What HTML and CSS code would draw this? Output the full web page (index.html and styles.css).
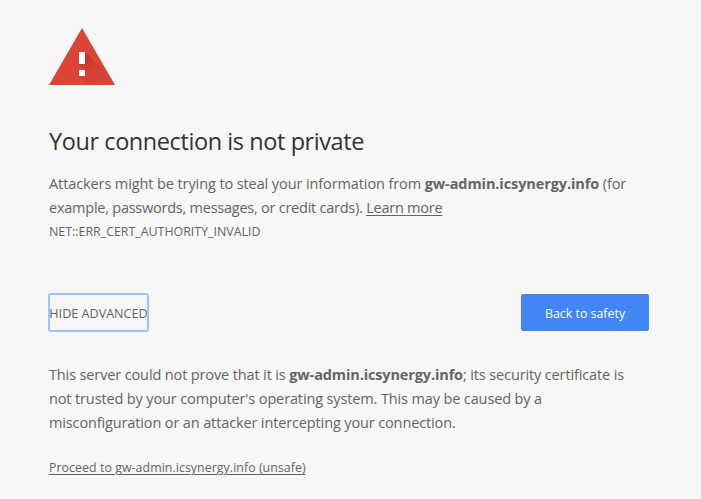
FILE: index.html
```html
<!DOCTYPE html>
<html lang="en">
<head>
<meta charset="utf-8">
<title>Privacy error</title>
<link rel="stylesheet" href="styles.css">
</head>
<body>
<main class="interstitial">
  <svg class="warning" viewBox="0 0 66 57" width="66" height="57" aria-hidden="true">
    <defs>
      <linearGradient id="shade" gradientUnits="userSpaceOnUse" x1="31" y1="30" x2="51" y2="50">
        <stop offset="0" stop-color="#a52714" stop-opacity=".5"/>
        <stop offset=".6" stop-color="#a52714" stop-opacity=".15"/>
        <stop offset="1" stop-color="#a52714" stop-opacity=".06"/>
      </linearGradient>
    </defs>
    <path d="M33 0L66 57H0z" fill="#db4437"/>
    <path d="M36 24L57 45L64 57H39L30 48L36 42L30 36z" fill="url(#shade)"/>
    <path d="M30 24h6v12h-6zM30 42h6v6h-6z" fill="#fff"/>
  </svg>
  <h1 class="title">Your connection is not private</h1>
  <p class="message">
    <span class="line m1">Attackers might be trying to steal your information from <strong>gw-admin.icsynergy.info</strong> (for</span>
    <span class="line m2">example, passwords, messages, or credit cards). <a href="#">Learn more</a></span>
  </p>
  <div class="code">NET::ERR_CERT_AUTHORITY_INVALID</div>
  <div class="actions">
    <button class="details">HIDE ADVANCED</button>
    <button class="primary">Back to safety</button>
  </div>
  <p class="message">
    <span class="line">This server could not prove that it is <strong>gw-admin.icsynergy.info</strong>; its security certificate is</span>
    <span class="line">not trusted by your computer's operating system. This may be caused by a</span>
    <span class="line">misconfiguration or an attacker intercepting your connection.</span>
  </p>
  <a class="proceed" href="#">Proceed to gw-admin.icsynergy.info (unsafe)</a>
</main>
</body>
</html>
```
FILE: styles.css
```css
body {
  margin: 0;
  background: #f7f7f7;
  color: #646464;
  font-family: "Open Sans", "Noto Sans", sans-serif;
  font-size: 14.5px;
  line-height: 24px;
}
.interstitial {
  width: 600px;
  padding: 28px 0 0 49px;
}
.warning {
  display: block;
  margin-bottom: 39px;
}
.title {
  margin: 0 0 14px;
  color: #333;
  font-size: 23.5px;
  font-weight: 400;
  line-height: 34px;
  letter-spacing: -0.42px;
  white-space: nowrap;
}
.message {
  margin: 0;
}
.line {
  display: block;
  letter-spacing: -0.13px;
  white-space: nowrap;
}
.m1 {
  letter-spacing: -0.1px;
}
.m2 {
  letter-spacing: -0.24px;
}
a {
  color: inherit;
  text-underline-offset: 2px;
  text-decoration-thickness: 1px;
}
.code {
  padding-top: 1px;
  font-size: 12.4px;
  line-height: 22px;
}
.actions {
  display: flex;
  justify-content: space-between;
  margin: 51px 0 32px;
}
button {
  box-sizing: border-box;
  height: 37px;
  padding: 2px 0 0;
  border: 0;
  border-radius: 2px;
  font: 12.4px "Open Sans", "Noto Sans", sans-serif;
  white-space: nowrap;
}
.details {
  width: 99px;
  background: none;
  color: #646464;
  font-size: 12.6px;
  outline: 2px solid #a1c1fb;
  outline-offset: -1px;
}
.primary {
  width: 128px;
  background: #4285f4;
  color: #fff;
}
.proceed {
  display: block;
  margin-top: 21px;
  font-size: 12.4px;
  letter-spacing: 0.04px;
}
```
